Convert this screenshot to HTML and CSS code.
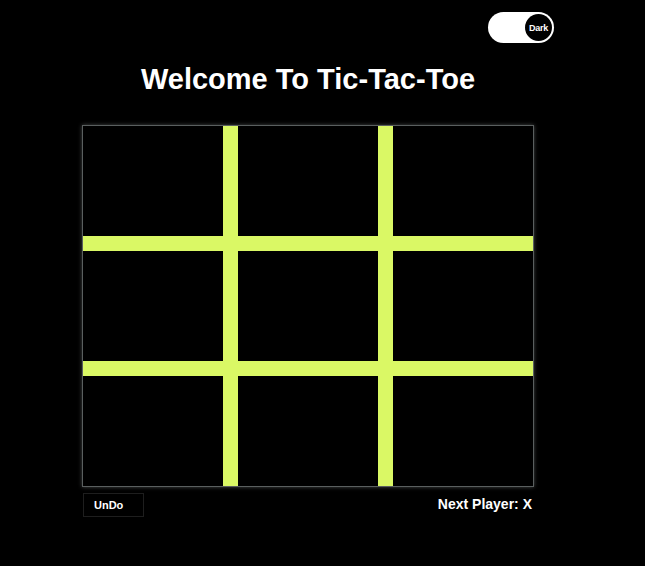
FILE: index.html
```html
<!DOCTYPE html>
<html>
<head>
<meta charset="utf-8">
<link rel="stylesheet" href="styles.css">
</head>
<body>
<div class="app">
  <div class="topbar">
    <div class="toggle"><span class="knob">Dark</span></div>
  </div>
  <h1 class="title">Welcome To Tic-Tac-Toe</h1>
  <div class="board">
    <div class="cell"></div><div class="cell"></div><div class="cell"></div>
    <div class="cell"></div><div class="cell"></div><div class="cell"></div>
    <div class="cell"></div><div class="cell"></div><div class="cell"></div>
  </div>
  <div class="footer">
    <button class="undo">UnDo</button>
    <div class="next">Next Player: X</div>
  </div>
</div>
</body>
</html>
```
FILE: styles.css
```css
html, body {
  margin: 0;
  padding: 0;
  background: #000;
  font-family: "Liberation Sans", Arial, sans-serif;
  color: #fff;
}
.app {
  margin-left: 82px;
  width: 472px;
  padding-top: 12px;
  display: flex;
  flex-direction: column;
}
.topbar {
  display: flex;
  justify-content: flex-end;
}
.toggle {
  width: 66px;
  height: 31px;
  box-sizing: border-box;
  background: #fff;
  border-radius: 16px;
  display: flex;
  align-items: center;
  justify-content: flex-end;
  padding-right: 2px;
}
.knob {
  width: 27px;
  height: 27px;
  border-radius: 50%;
  background: #000;
  color: #fff;
  font-size: 9px;
  font-weight: bold;
  display: flex;
  align-items: center;
  justify-content: center;
  letter-spacing: -0.2px;
}
.title {
  width: 452px;
  margin: 19px 0 0 0;
  text-align: center;
  font-size: 29px;
  font-weight: bold;
  line-height: 34px;
}
.board {
  width: 452px;
  margin-top: 29px;
  box-sizing: border-box;
  border: 1px solid #5a5f5f;
  box-shadow: 0 0 4px rgba(200, 210, 210, 0.35);
  background: #daf865;
  display: grid;
  grid-template-columns: 140px 140px 140px;
  grid-template-rows: 110px 110px 110px;
  gap: 15px;
}
.cell {
  background: #000;
}
.footer {
  width: 452px;
  margin-top: 6px;
  display: flex;
  justify-content: space-between;
  align-items: center;
}
.undo {
  width: 61px;
  height: 24px;
  margin-left: 1px;
  background: #000;
  border: 1px solid #1e1e1e;
  color: #fff;
  font-family: "Liberation Sans", Arial, sans-serif;
  font-size: 11px;
  font-weight: bold;
  text-align: left;
  padding: 0 0 0 10px;
}
.next {
  font-size: 14px;
  font-weight: bold;
  margin-right: 2px;
  margin-top: -2px;
}
```
